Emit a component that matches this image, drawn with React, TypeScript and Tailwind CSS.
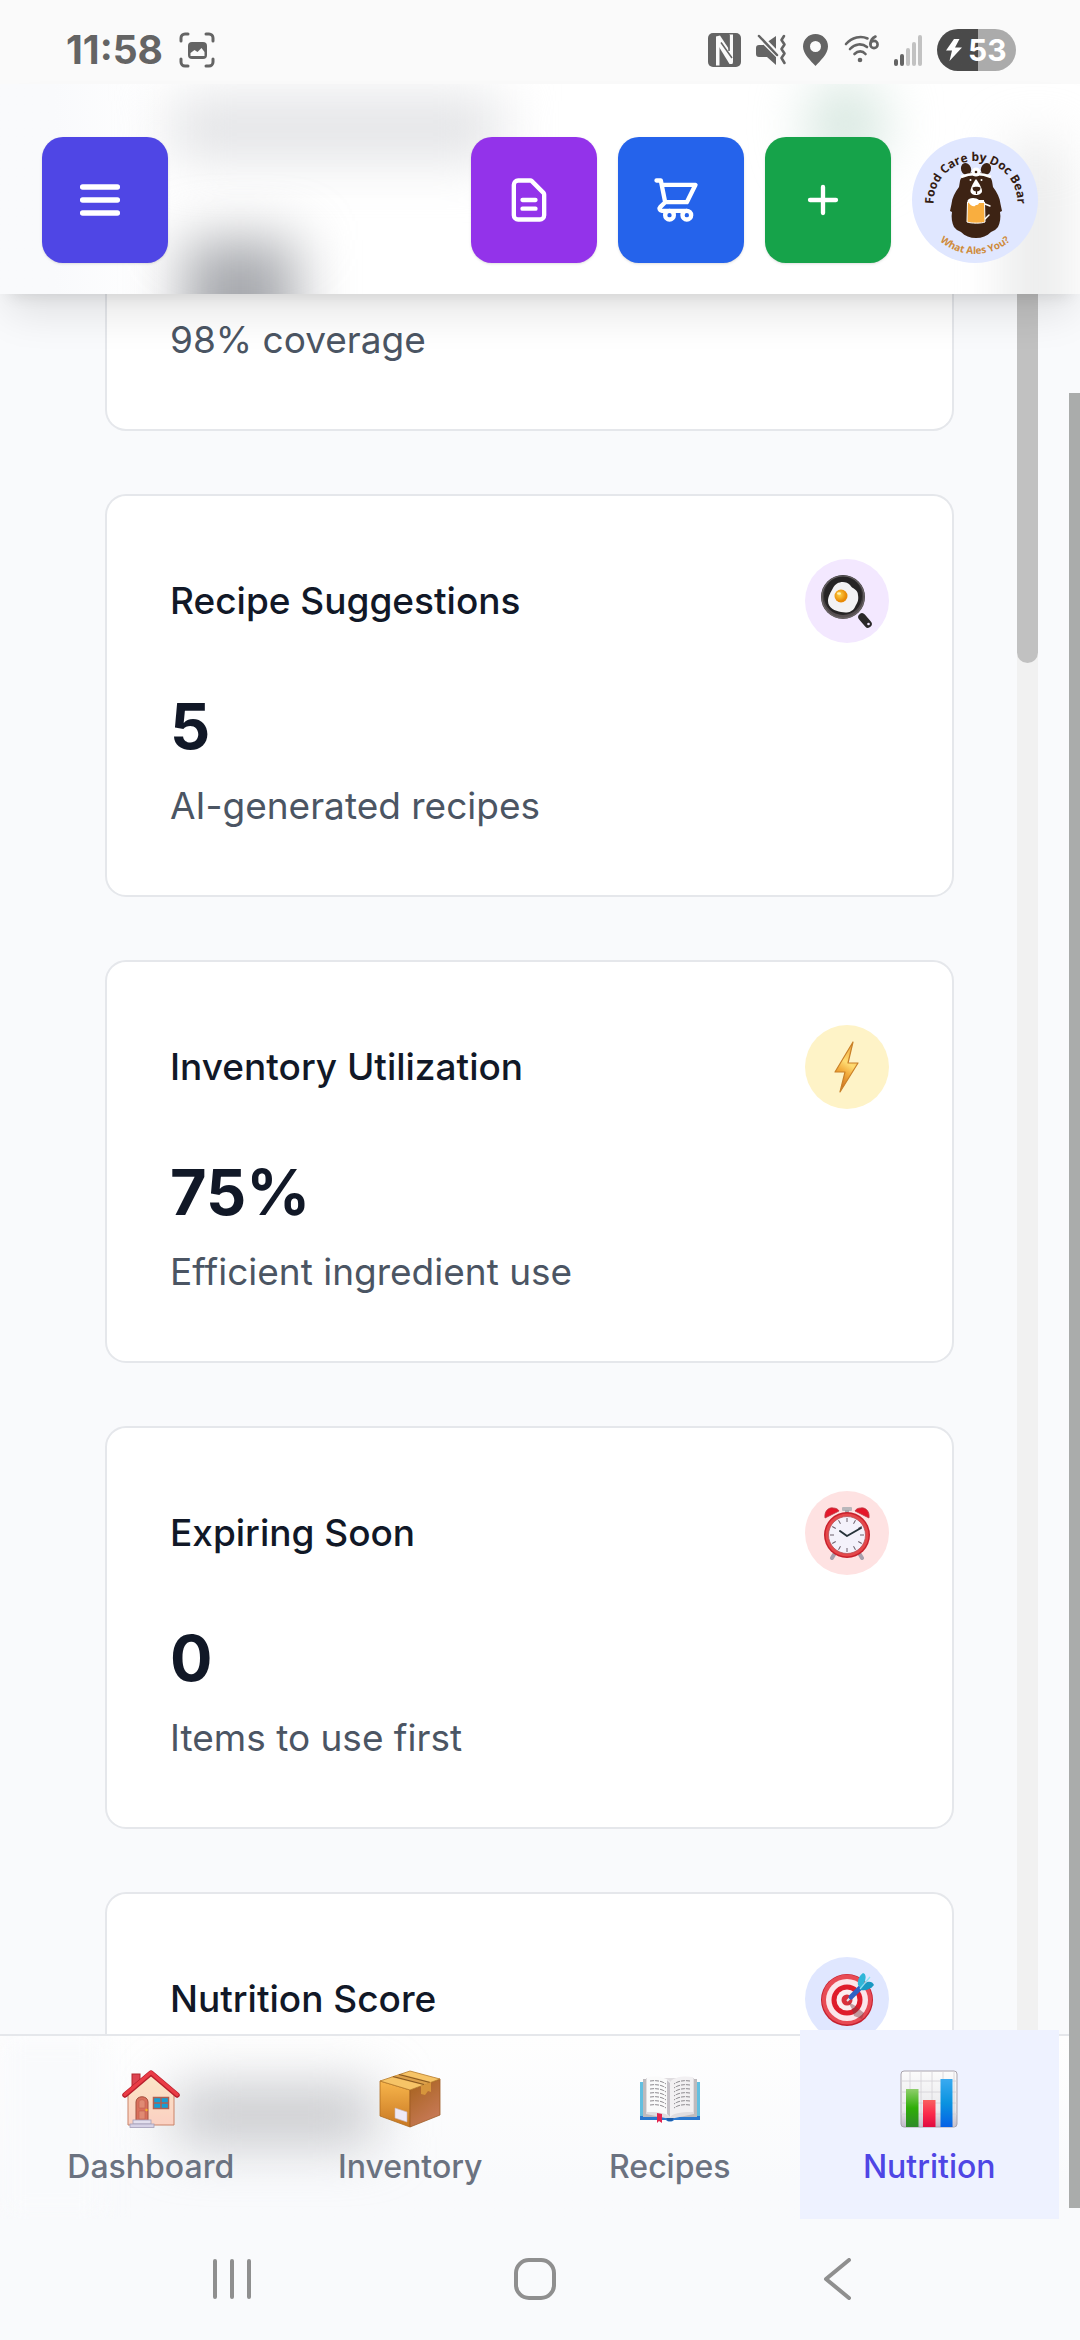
import type { ReactNode } from "react";

/* ---------- status bar ---------- */

function StatusBar() {
  return (
    <div className="flex h-[84px] items-center justify-between bg-[#fafafa] pt-[16px] pr-[64px] pl-[66px] text-[#646464]">
      <div className="flex items-center gap-[16px]">
        <span className="text-[39px] leading-[40px] font-bold">11:58</span>
        <svg width="36" height="36" viewBox="0 0 36 36" fill="none">
          <g stroke="currentColor" strokeWidth="3" strokeLinecap="round">
            <path d="M2 9V6a4 4 0 0 1 4-4h3M27 2h3a4 4 0 0 1 4 4v3M34 27v3a4 4 0 0 1-4 4h-3M9 34H6a4 4 0 0 1-4-4v-3" />
          </g>
          <rect x="9" y="10" width="19" height="17" rx="4" fill="currentColor" />
          <path d="M11.500 24v-3l4-3 3 2 4-4 3 4v4z" fill="#fafafa" />
        </svg>
      </div>
      <div className="flex items-center">
        <svg className="mr-[15px]" width="33" height="34" viewBox="0 0 33 34">
          <rect width="33" height="34" rx="5" fill="currentColor" />
          <path d="M8 3.500L11.500 8v24.500H8z M25 30.500L21.500 26V1.500H25z" fill="#fafafa" />
          <path d="M8 3.500l4-1 12.500 19v9.500h-3L8 9z" fill="#fafafa" />
          <path d="M13 9.500l11 15.500M21 2v16" stroke="currentColor" strokeWidth="1.500" fill="none" />
        </svg>
        <svg className="mr-[16px]" width="31" height="32" viewBox="0 0 31 32" fill="none">
          <path d="M3 11h4l13-9v29l-9-8H3a3 3 0 0 1-3-3v-6a3 3 0 0 1 3-3z" fill="currentColor" />
          <path d="M1 0l21 21" stroke="#fafafa" strokeWidth="6" />
          <path d="M3 2l18 19" stroke="currentColor" strokeWidth="2.500" strokeLinecap="round" />
          <path d="M28 2l-2.500 4 3 4.500-3 4.500 3 4.500-3 4.500 3 5" stroke="currentColor" strokeWidth="2.600" strokeLinecap="round" strokeLinejoin="round" />
        </svg>
        <svg className="mr-[16px]" width="25" height="32" viewBox="0 0 25 32">
          <path fillRule="evenodd" d="M12.500 0C5.500 0 0 5.500 0 12.500 0 20 8 27 12.500 32 17 27 25 20 25 12.500 25 5.500 19.500 0 12.500 0zm0 7a5.500 5.500 0 1 1 0 11 5.500 5.500 0 0 1 0-11z" fill="currentColor" />
        </svg>
        <svg className="mr-[14px]" width="36" height="32" viewBox="0 0 36 32" fill="none">
          <g stroke="currentColor" strokeWidth="2.600" strokeLinecap="round">
            <path d="M2 10C8 3 17 1.500 23.500 4.500" />
            <path d="M6 15c5-5.500 12-6 17-2" />
            <path d="M10.500 20c3.500-3.500 8-3.500 11 0" />
            <path d="M31.500 2.500c-3 1.500-5 4.500-5 7.500" />
            <circle cx="30" cy="10.500" r="3.600" />
          </g>
          <circle cx="16" cy="26" r="2.300" fill="currentColor" />
        </svg>
        <svg className="mr-[15px]" width="28" height="32" viewBox="0 0 28 32" fill="currentColor">
          <rect y="25" width="4" height="7" rx="2" />
          <rect x="6" y="20" width="4" height="12" rx="2" />
          <g fill="#c2c2c2">
            <rect x="12" y="14" width="4" height="18" rx="2" />
            <rect x="18" y="8" width="4" height="24" rx="2" />
            <rect x="24" y="1" width="4" height="31" rx="2" />
          </g>
        </svg>
        <div className="flex h-[42px] w-[79px] items-center gap-[6px] rounded-full bg-linear-to-r from-[#4a4a4a] from-52% to-[#ababab] to-52% pl-[9px] text-white">
          <svg width="16" height="22" viewBox="0 0 16 22" fill="currentColor">
            <path d="M8 0L0 11.500h6L3.500 22 16 8.500H9L13.500 0z" />
          </svg>
          <span className="text-[30px] leading-[42px] font-bold">53</span>
        </div>
      </div>
    </div>
  );
}

/* ---------- header ---------- */

function BearLogo() {
  return (
    <svg className="size-[126px]" viewBox="0 0 126 126" aria-label="Food Care by Doc Bear">
      <defs>
        <path id="arcTop" d="M21.500 66A42 42 0 1 1 105.500 66" />
        <path id="arcBottom" d="M9 63A54 54 0 0 0 117 63" />
      </defs>
      <circle cx="63" cy="63" r="63" fill="#e0e7ff" />
      <text fontFamily="'Liberation Sans Narrow', 'Open Sans', sans-serif" fontWeight="700" fontSize="12" fill="#341c12">
        <textPath href="#arcTop" startOffset="50%" textAnchor="middle">Food Care by Doc Bear</textPath>
      </text>
      <text fontFamily="'Liberation Sans Narrow', 'Open Sans', sans-serif" fontWeight="700" fontSize="10" fill="#cf8b3c">
        <textPath href="#arcBottom" startOffset="50%" textAnchor="middle">What Ales You?</textPath>
      </text>
      <g fill="#3d2314">
        <ellipse cx="54" cy="32" rx="5" ry="6" transform="rotate(-20 54 32)" />
        <ellipse cx="74" cy="32" rx="5" ry="6" transform="rotate(20 74 32)" />
        <path d="M64 35c-9 0-15 4-16 9l-1 6c-4 5-7 11-7.500 17L38 74l2 1c-1 5 0 11 2 15l3 3 4 2c4 4 9 6 15 6s11-2 15-6l4-2 3-3c2-4 3-10 2-15l2-1-1.500-7c-.5-6-3.500-12-7.500-17l-1-6c-1-5-7-9-16-9z" />
      </g>
      <path d="M49 40c9-4 21-4 30 0" stroke="#fff" strokeWidth="2.500" fill="none" />
      <circle cx="64" cy="35" r="4.500" fill="#fff" />
      <circle cx="64" cy="35" r="1.300" fill="#3d2314" />
      <g fill="#fff">
        <circle cx="58.500" cy="43" r="1" />
        <circle cx="69.500" cy="43" r="1" />
        <path d="M64 42c-3 4-5.500 9-5.500 12 0 2.500 2.500 4 5.500 4s6-1.500 6-4c0-3-3-8-6-12z" />
      </g>
      <path d="M60.500 50.500c2-1 6-1 8 0 0 3-2 4-4 4s-4-1-4-4z" fill="#3d2314" />
      <path d="M64.500 54v3" stroke="#3d2314" strokeWidth="1.200" />
      <path d="M73 67l5 2M73 82l4-4" stroke="#fff" strokeWidth="1.500" strokeLinecap="round" />
      <path d="M55.500 65h17l.5 20c-3 1.500-14 1.500-18 0z" fill="#f9ae3f" stroke="#fff" strokeWidth="1" />
      <path d="M57 62c3-2 8-1 10 1h5v3h-5c-1 3-3 1-4 3-2 1-5-1-6-3-2-1-2-3 0-4z" fill="#fff" />
    </svg>
  );
}

function Glyph({ path, weight, children }: { path?: string; weight: number; children?: ReactNode }) {
  return (
    <svg className="size-[52px]" viewBox="0 0 24 24" fill="none" stroke="currentColor" strokeWidth={weight} strokeLinecap="round" strokeLinejoin="round">
      {path && <path d={path} />}
      {children}
    </svg>
  );
}

const buttonBase = "flex size-[126px] items-center justify-center rounded-[21px] pr-[10px] text-white shadow-sm";

function Header() {
  return (
    <header className="relative z-10 flex h-[210px] items-center justify-between bg-linear-to-r from-[#f9fafc] from-5% via-white via-15% to-white px-[42px] pt-[22px] shadow-[0_26px_40px_-8px_rgba(0,0,0,0.11),0_10px_16px_-10px_rgba(0,0,0,0.12)]">
      <div className="absolute inset-0 overflow-hidden" aria-hidden="true">
        <div className="absolute top-[16px] left-[170px] h-[56px] w-[330px] bg-[#dedfe2] blur-[28px]" />
        <div className="absolute top-[156px] left-[184px] h-[120px] w-[112px] bg-[#a6a8ad] blur-[28px]" />
        <div className="absolute top-[0px] left-[810px] h-[80px] w-[72px] rounded-full bg-[#cfe3da] blur-[28px]" />
        <div className="absolute top-[60px] left-[1016px] h-[240px] w-[40px] bg-[#dfe0e0] blur-[28px]" />
      </div>
      <button aria-label="Open menu" className={`${buttonBase} relative bg-[#4f46e5]`}>
        <Glyph weight={2.5} path="M4 6h16M4 12h16M4 18h16" />
      </button>
      <div className="relative flex gap-[21px]">
        <button aria-label="Notes" className={`${buttonBase} bg-[#9333ea]`}>
          <Glyph weight={2} path="M9 12h6m-6 4h6m2 5H7a2 2 0 01-2-2V5a2 2 0 012-2h5.586a1 1 0 01.707.293l5.414 5.414a1 1 0 01.293.707V19a2 2 0 01-2 2z" />
        </button>
        <button aria-label="Shopping cart" className={`${buttonBase} bg-[#2563eb]`}>
          <Glyph weight={2} path="M3 3h2l.4 2M7 13h10l4-8H5.400M7 13L5.400 5M7 13l-2.293 2.293c-.63.63-.184 1.707.707 1.707H17">
            <circle cx="9" cy="19" r="2" />
            <circle cx="17" cy="19" r="2" />
          </Glyph>
        </button>
        <button aria-label="Add" className={`${buttonBase} bg-[#16a34a]`}>
          <Glyph weight={2} path="M12 6v12M6 12h12" />
        </button>
        <button aria-label="Profile" className="size-[126px] rounded-full">
          <BearLogo />
        </button>
      </div>
    </header>
  );
}

/* ---------- emoji drawings ---------- */

function EggPan() {
  return (
    <svg className="size-[54px]" viewBox="0 0 54 54">
      <defs>
        <radialGradient id="yolk" cx="40%" cy="40%"><stop offset="0" stopColor="#ffd34a" /><stop offset="1" stopColor="#e88a05" /></radialGradient>
        <linearGradient id="pan" x1="0" y1="0" x2="0" y2="1"><stop offset="0" stopColor="#2a2a2a" /><stop offset="1" stopColor="#5b5355" /></linearGradient>
      </defs>
      <path d="M42 43l6 7" stroke="#2a2829" strokeWidth="7.500" strokeLinecap="round" />
      <circle cx="48.500" cy="50" r="1.300" fill="#f3e8ff" />
      <circle cx="23" cy="23" r="22" fill="url(#pan)" />
      <circle cx="23" cy="22" r="19" fill="#262425" />
      <circle cx="23" cy="23" r="21" fill="none" stroke="#6a6566" strokeWidth="1.200" />
      <path d="M13 14c3-7 13-8 17-3 2 4 8 4 8 10 1 6-1 8-3 12-3 6-9 6-14 5-6-1-13-4-13-11 0-5 3-9 5-13z" fill="#f3f2f4" />
      <circle cx="21" cy="22" r="6.500" fill="url(#yolk)" />
      <ellipse cx="19" cy="19.500" rx="2" ry="1.300" fill="#fff2b0" />
    </svg>
  );
}

function Bolt() {
  return (
    <svg className="size-[54px]" viewBox="0 0 54 54">
      <defs>
        <linearGradient id="bolt" x1="0.600" y1="0" x2="0.300" y2="1"><stop offset="0" stopColor="#f0a63a" /><stop offset="0.400" stopColor="#ffdc73" /><stop offset="0.600" stopColor="#f3ac3c" /><stop offset="1" stopColor="#c8641a" /></linearGradient>
      </defs>
      <path d="M33 2L15 32h10l-5 20 18-29H28z" fill="url(#bolt)" stroke="#c98028" strokeWidth="1.200" strokeLinejoin="round" />
    </svg>
  );
}

const ticks = [0, 30, 60, 90, 120, 150, 180, 210, 240, 270, 300, 330];

function AlarmClock() {
  return (
    <svg className="size-[54px]" viewBox="0 0 54 54">
      <path d="M15 47l-3 5M39 47l3 5" stroke="#a79fac" strokeWidth="4" strokeLinecap="round" />
      <rect x="22" y="1" width="10" height="4" rx="1" fill="#b9b7bb" />
      <rect x="25" y="4" width="4" height="5" fill="#a9a6ab" />
      <path d="M5 12C4 5 9 1 13 2c3 0 5 1 6 3z" fill="#e5172a" stroke="#b93a42" strokeWidth="0.800" />
      <path d="M49 12c1-7-4-11-8-10-3 0-5 1-6 3z" fill="#e5172a" stroke="#b93a42" strokeWidth="0.800" />
      <circle cx="27" cy="29" r="23" fill="#c8202c" />
      <circle cx="27" cy="29" r="21.500" fill="#e5474a" />
      <circle cx="27" cy="29" r="18.500" fill="#f4f2fb" stroke="#b85358" strokeWidth="0.800" />
      {ticks.map((angle) => (
        <path key={angle} d="M27 12v4" stroke="#6b5f6b" strokeWidth="1" transform={`rotate(${angle} 27 29)`} />
      ))}
      <path d="M20 25l7 5 14-8" stroke="#27333a" strokeWidth="2" fill="none" strokeLinecap="round" strokeLinejoin="round" />
    </svg>
  );
}

function Target() {
  return (
    <svg className="size-[54px]" viewBox="0 0 54 54">
      <circle cx="27" cy="28" r="26" fill="#c4202f" />
      <circle cx="27" cy="27.500" r="25" fill="#e84b55" />
      <circle cx="27" cy="28" r="21" fill="#fbe6ea" />
      <circle cx="27" cy="28" r="15.500" fill="#df1c2b" />
      <circle cx="27" cy="28" r="10.500" fill="#fbeef1" />
      <circle cx="27" cy="28" r="5.500" fill="#d9303c" />
      <path d="M28 30l6 3 10 8-2 6-8-3-2-7z" fill="#7c3c42" opacity="0.450" />
      <path d="M27 29l6-6" stroke="#dfe3ea" strokeWidth="2" />
      <path d="M31 25L43 13" stroke="#2f62c5" strokeWidth="5" strokeLinecap="round" />
      <path d="M38 13c-1-5 2-10 5-12 3 1 3 4 2 8l-4 8z" fill="#2fb6d8" />
      <path d="M40 17l7-7c3-1 6 0 7 3-3 4-8 6-13 5z" fill="#1998c2" />
      <path d="M40 17l10-12" stroke="#8be3f2" strokeWidth="1.200" />
    </svg>
  );
}

function House() {
  return (
    <svg className="size-[58px]" viewBox="0 0 58 58">
      <defs>
        <linearGradient id="wall" x1="0" y1="0" x2="0" y2="1"><stop offset="0" stopColor="#fbe6c6" /><stop offset="1" stopColor="#fbd0c2" /></linearGradient>
      </defs>
      <rect x="10" y="4" width="8" height="16" fill="#dd4350" stroke="#b3262f" />
      <path d="M6 24L29 4l23 20v31H6z" fill="url(#wall)" stroke="#c98368" />
      <path d="M3 25L29 3l26 22" fill="none" stroke="#b71f2c" strokeWidth="5.500" strokeLinecap="round" strokeLinejoin="round" />
      <path d="M3 24.500L29 2.500l26 22" fill="none" stroke="#ea3c46" strokeWidth="3.500" strokeLinecap="round" strokeLinejoin="round" />
      <path d="M14 51V32c0-7 12-7 12 0v19z" fill="#d9705c" stroke="#a5523f" />
      <path d="M17 38V32c0-3 6-3 6 0v6zM17 41h6v8h-6z" fill="#e08a73" stroke="#bf5f4d" strokeWidth="0.600" />
      <circle cx="24.500" cy="40" r="1.200" fill="#f7b529" />
      <rect x="31.500" y="27.500" width="15" height="11" fill="#149fd6" stroke="#b06050" strokeWidth="1.500" />
      <path d="M39 28v10M32 33h14" stroke="#b06050" strokeWidth="1.500" />
      <rect x="11" y="50" width="18" height="4" fill="#e3dfee" stroke="#a49fb8" strokeWidth="0.800" />
      <rect x="8" y="54" width="24" height="3.500" fill="#d6d1e5" stroke="#a49fb8" strokeWidth="0.800" />
    </svg>
  );
}

function Package() {
  return (
    <svg className="size-[62px]" viewBox="0 0 62 62">
      <defs>
        <linearGradient id="boxL" x1="0" y1="0" x2="0" y2="1"><stop offset="0" stopColor="#f8b64c" /><stop offset="1" stopColor="#c87722" /></linearGradient>
        <linearGradient id="boxR" x1="0" y1="0" x2="0.500" y2="1"><stop offset="0" stopColor="#a5611a" /><stop offset="1" stopColor="#c77956" /></linearGradient>
      </defs>
      <path d="M1 13l30 9v37L1 48z" fill="url(#boxL)" stroke="#b06d20" strokeWidth="0.800" />
      <path d="M61 11l-30 11v37l30-12z" fill="url(#boxR)" stroke="#9f5c24" strokeWidth="0.800" />
      <path d="M1 13L31 3l30 8-30 11z" fill="#f6c467" stroke="#b57a2a" strokeWidth="0.800" />
      <path d="M12 9l32 8 8-3L22 6z" fill="#dca04a" />
      <path d="M14 8.500l31 8M20 6.500l31 8" stroke="#87581f" strokeWidth="1.200" />
      <path d="M42 18l10-4v10l-3-1-3 4-4-1z" fill="#d6953c" />
      <path d="M16 40l12 4v10l-12-4z" fill="#eee9f5" stroke="#c9b7c0" strokeWidth="0.600" />
    </svg>
  );
}

const bookLines = [10, 14, 18, 22, 26, 30, 34];

function Book() {
  return (
    <svg className="size-[62px]" viewBox="0 0 62 62">
      <path d="M1 14h60v38H35c-2 2-6 2-8 0H1z" fill="#2a78cf" />
      <path d="M1 14h60v34H1z" fill="#62bfe0" />
      <path d="M4 11h54v38H4z" fill="#bdbabd" />
      <path d="M7 10h48v36l-24 5-24-5z" fill="#e0dde0" />
      <path d="M8 9c8-1 18-1 23 5v35c-5-5-15-5-23-5z" fill="#fafafa" />
      <path d="M54 9c-8-1-18-1-23 5v35c5-5 15-5 23-5z" fill="#f2f0f2" />
      <path d="M28 12l3 3v34l-3-3z" fill="#c6c2c8" />
      {bookLines.map((y) => (
        <g key={y} stroke="#8d8a8f" strokeWidth="1" strokeDasharray="4 1" fill="none">
          <path d={`M11 ${y + 3}c6-1 12 0 16 3`} />
          <path d={`M51 ${y + 3}c-6-1-12 0-16 3`} />
        </g>
      ))}
      <path d="M18 45l5 1v9l-3-2-2 2z" fill="#e2254f" />
      <path d="M27 50h8l-2 3h-4z" fill="#1d5fae" />
    </svg>
  );
}

function BarChart() {
  return (
    <svg className="size-[58px]" viewBox="0 0 58 58">
      <defs>
        <linearGradient id="sheet" x1="0" y1="0" x2="0" y2="1"><stop offset="0" stopColor="#fbfbfb" /><stop offset="0.700" stopColor="#e9e9ec" /><stop offset="1" stopColor="#bfb9c8" /></linearGradient>
        <linearGradient id="barG" x1="0" y1="0" x2="0" y2="1"><stop offset="0" stopColor="#8fce6c" /><stop offset="0.500" stopColor="#2fae08" /><stop offset="1" stopColor="#2f8a2a" /></linearGradient>
        <linearGradient id="barR" x1="0" y1="0" x2="0" y2="1"><stop offset="0" stopColor="#f9605f" /><stop offset="0.500" stopColor="#fb2b4b" /><stop offset="1" stopColor="#e0093f" /></linearGradient>
        <linearGradient id="barB" x1="0" y1="0" x2="0" y2="1"><stop offset="0" stopColor="#3aaaf0" /><stop offset="0.500" stopColor="#0a93e0" /><stop offset="1" stopColor="#0561e6" /></linearGradient>
      </defs>
      <rect x="1" y="1" width="56" height="56" rx="3" fill="url(#sheet)" stroke="#a9a4ad" />
      <path d="M10 1v56M21 1v56M32 1v56M43 1v56M54 1v56M1 11h56M1 22h56M1 33h56M1 44h56" stroke="#d3d1d6" strokeWidth="0.800" />
      <rect x="6" y="19" width="12.500" height="38" fill="url(#barG)" />
      <rect x="23" y="30" width="12.500" height="27" fill="url(#barR)" />
      <rect x="40.500" y="9" width="12" height="48" fill="url(#barB)" />
    </svg>
  );
}

/* ---------- cards ---------- */

type Stat = { title: string; value: string; note: string; tint: string; icon: ReactNode };

const stats: Stat[] = [
  { title: "Recipe Suggestions", value: "5", note: "AI-generated recipes", tint: "bg-[#f3e8ff]", icon: <EggPan /> },
  { title: "Inventory Utilization", value: "75%", note: "Efficient ingredient use", tint: "bg-[#fef3c7]", icon: <Bolt /> },
  { title: "Expiring Soon", value: "0", note: "Items to use first", tint: "bg-[#fee2e2]", icon: <AlarmClock /> },
];

function CardHead({ title, tint, icon }: { title: string; tint: string; icon: ReactNode }) {
  return (
    <div className="flex items-center justify-between">
      <h2 className="text-[37px] leading-[52px] font-medium text-[#111827]">{title}</h2>
      <div className={`flex size-[84px] items-center justify-center rounded-full ${tint}`}>{icon}</div>
    </div>
  );
}

const note = "text-[37px] leading-[52px] text-[#4b5563]";
const card = "rounded-[21px] border-2 border-[#e5e7eb] bg-white p-[63px]";

function StatCard({ stat }: { stat: Stat }) {
  return (
    <section className={card}>
      <CardHead title={stat.title} tint={stat.tint} icon={stat.icon} />
      <p className="mt-[41px] text-[63px] leading-[84px] font-bold text-[#111827]">{stat.value}</p>
      <p className={`mt-[12px] ${note}`}>{stat.note}</p>
    </section>
  );
}

/* ---------- bottom navigation ---------- */

const tabs = [
  { label: "Dashboard", icon: <House />, active: false },
  { label: "Inventory", icon: <Package />, active: false },
  { label: "Recipes", icon: <Book />, active: false },
  { label: "Nutrition", icon: <BarChart />, active: true },
];

function BottomNav() {
  return (
    <nav className="relative z-10 border-t-2 border-[#e5e7eb] bg-linear-to-b from-[#fefefe] to-[#f9fafc] to-80% px-[21px]">
      <div className="absolute inset-0 overflow-hidden" aria-hidden="true">
        <div className="absolute inset-y-0 left-0 w-[105px] bg-[#f9fafc] blur-[12px]" />
        <div className="absolute top-[54px] left-[175px] h-[50px] w-[200px] bg-[#bfc0c4] blur-[28px]" />
      </div>
      <div className="relative -mt-[6px] flex">
        {tabs.map((tab) => (
          <a
            key={tab.label}
            href="#"
            aria-current={tab.active ? "page" : undefined}
            className={`flex h-[189px] flex-1 flex-col items-center gap-[16px] pt-[38px] text-[32px] leading-[42px] font-medium ${tab.active ? "bg-[#eef2ff] text-[#4f46e5]" : "text-[#6b7280]"}`}
          >
            <span className="flex h-[62px] items-center">{tab.icon}</span>
            {tab.label}
          </a>
        ))}
      </div>
    </nav>
  );
}

function SystemKeys() {
  return (
    <div className="flex h-[121px] justify-around bg-[#f9fafc] pt-[39px] pr-[91px] pl-[81px] text-[#8f8f8f]">
      <button aria-label="Recent apps" className="size-[42px]">
        <svg viewBox="0 0 42 42" stroke="currentColor" strokeWidth="4" strokeLinecap="round"><path d="M4 3v36M21 3v36M38 3v36" /></svg>
      </button>
      <button aria-label="Home" className="size-[42px]">
        <svg viewBox="0 0 42 42" fill="none" stroke="currentColor" strokeWidth="4"><rect x="2" y="2" width="38" height="38" rx="13" /></svg>
      </button>
      <button aria-label="Back" className="size-[42px]">
        <svg viewBox="0 0 42 42" fill="none" stroke="currentColor" strokeWidth="4" strokeLinecap="round" strokeLinejoin="round"><path d="M32 2L9 21l23 19" /></svg>
      </button>
    </div>
  );
}

export default function App() {
  return (
    <div className="relative flex h-screen flex-col overflow-hidden bg-[#f9fafc] font-['Inter',sans-serif]">
      <StatusBar />
      <Header />
      <main className="flex min-h-0 flex-1 overflow-hidden px-[42px]">
        <div className="flex flex-1 flex-col gap-[63px] px-[63px]">
          <section className="rounded-b-[21px] border-2 border-t-0 border-[#e5e7eb] bg-white px-[63px] pt-[20px] pb-[63px]">
            <p className={note}>98% coverage</p>
          </section>
          {stats.map((stat) => (
            <StatCard key={stat.title} stat={stat} />
          ))}
          <section className={card}>
            <CardHead title="Nutrition Score" tint="bg-[#e0e7ff]" icon={<Target />} />
          </section>
        </div>
        <div className="w-[21px] bg-[#f1f1f1]">
          <div className="h-[369px] rounded-b-full bg-[#c1c1c1]" />
        </div>
      </main>
      <BottomNav />
      <SystemKeys />
      <div className="absolute top-[393px] right-0 bottom-[132px] z-20 w-[11px] bg-[#aaacab]" aria-hidden="true" />
    </div>
  );
}
